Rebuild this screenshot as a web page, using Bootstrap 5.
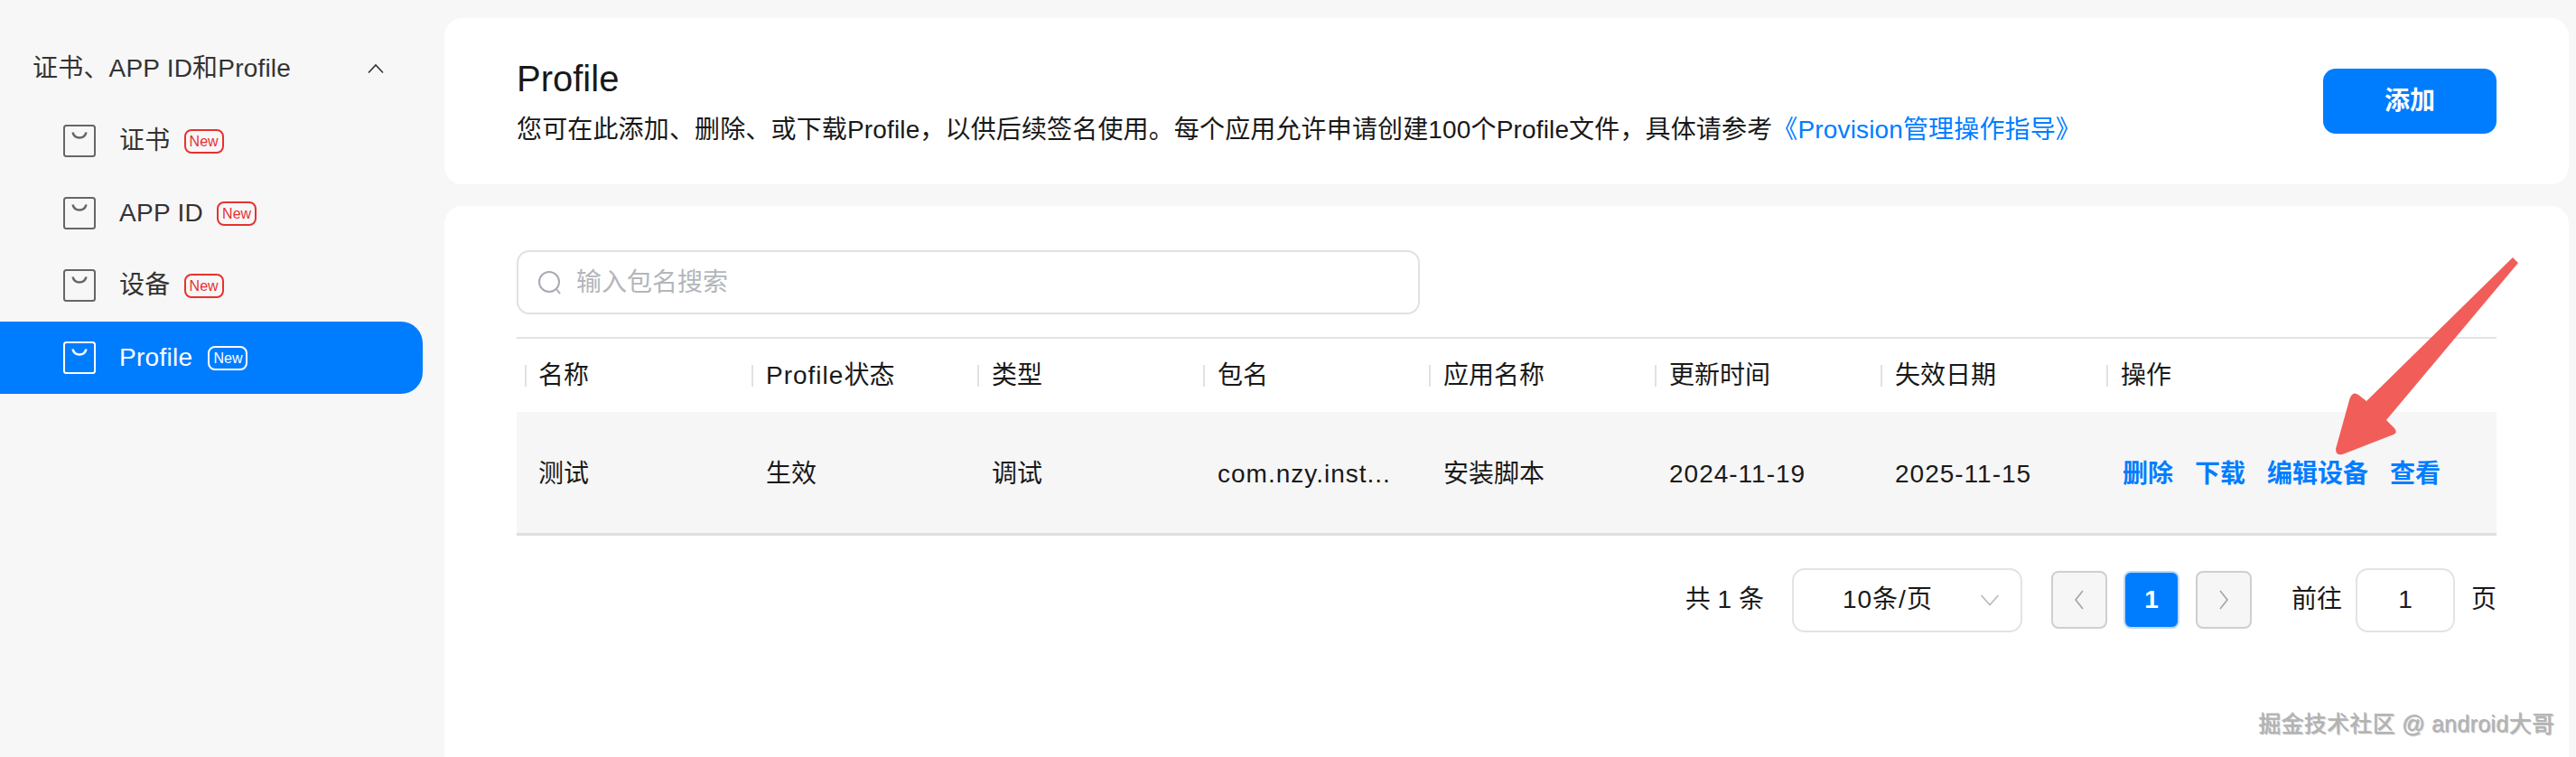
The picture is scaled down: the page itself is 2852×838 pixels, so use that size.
<!DOCTYPE html>
<html lang="zh">
<head>
<meta charset="utf-8">
<title>Profile</title>
<link href="https://cdn.jsdelivr.net/npm/bootstrap@5.3.0/dist/css/bootstrap.min.css" rel="stylesheet">
<style>
html,body{height:100%;}
body{background:#f7f7f7;color:#191919;font-family:"Liberation Sans","Noto Sans CJK SC",sans-serif;font-size:28px;overflow:hidden;}
.shell{height:838px;position:relative;}
.side{width:492px;padding:36px 24px 0 0;flex:none;}
.side-head{height:80px;padding:0 42px 0 36px;color:#333;letter-spacing:.2px;}
.side-item{height:80px;padding-left:70px;color:#333;gap:26px;border-radius:0 24px 24px 0;letter-spacing:.3px;}
.side-item.on{background:#007dff;color:#fff;}
.new-tag{font-size:16px;letter-spacing:0;line-height:23px;height:27px;padding:0 4px;border:2px solid #e8312f;color:#e8312f;border-radius:8px;margin-left:-11px;}
.on .new-tag{border-color:#fff;color:#fff;margin-left:-9px;}
.main-col{padding:20px 8px 0 0;gap:24px;min-width:0;}
.panel-top{height:184px;background:#fff;border-radius:20px;padding:0 80px;}
.panel-top h1{font-size:40px;font-weight:400;line-height:50px;margin:0 0 13px;}
.panel-top p{margin:0;line-height:38px;letter-spacing:.15px;}
.panel-top a,.act a{color:#007dff;text-decoration:none;}
.btn-add{width:192px;height:72px;background:#007dff;color:#fff;font-size:28px;font-weight:700;border:0;border-radius:14px;}
.panel-list{background:#fff;border-radius:20px 20px 0 0;padding:49px 80px 0;}
.search-box{width:1000px;height:71px;border:2px solid #dfe1e5;border-radius:14px;padding-left:22px;gap:16px;color:#b3b6bb;}
.data-grid{margin-top:25px;border-top:2px solid #e3e3e3;border-bottom:3px solid #dedede;}
.grid-line{display:grid;grid-template-columns:251px repeat(6,250px) 1fr;}
.grid-head{height:81px;}
.grid-body{height:134px;background:#f6f6f6;}
.cell{padding-left:25px;position:relative;white-space:nowrap;}
.cell:first-child{padding-left:24px;}
.grid-body .cell{padding-top:4px;}
.grid-head .cell::before{content:"";position:absolute;left:9px;top:50%;margin-top:-12px;width:2px;height:24px;background:#e2e2e2;}
.wide-run{letter-spacing:1px;}
.act{gap:24px;padding-left:27px;font-weight:700;}
.pager{height:142px;}
.sel-box{width:255px;height:71px;border:2px solid #e3e3e3;border-radius:14px;margin-left:31px;padding:0 23px 0 54px;background:#fff;}
.pg-wrap{gap:18px;margin:0 44px 0 32px;}
.pg{width:62px;height:64px;border-radius:8px;border:2px solid #cfcfcf;background:#f6f6f6;}
.pg.cur{background:#007dff;border-color:#c3d9f2;color:#fff;font-weight:700;}
.jump{width:110px;height:71px;border:2px solid #e3e3e3;border-radius:14px;margin:0 18px 0 15px;}
.mark-text{position:absolute;right:23px;top:786px;font-size:25px;letter-spacing:.3px;line-height:32px;color:#b4b4b4;text-shadow:-1px -1px 0 rgba(120,120,120,.55),1px 1px 0 rgba(235,235,235,.8);}
.arrow-over{position:absolute;left:2570px;top:270px;}
</style>
</head>
<body>
<div class="shell d-flex">
  <aside class="side">
    <div class="side-head d-flex align-items-center justify-content-between">
      <span>证书、APP ID和Profile</span>
      <svg width="20" height="12" viewBox="0 0 20 12" fill="none" stroke="#333" stroke-width="1.6"><path d="M2 10.5 10 2l8 8.500"/></svg>
    </div>
    <div class="side-item d-flex align-items-center">
      <svg width="36" height="36" viewBox="0 0 36 36" fill="none" stroke="#666" stroke-width="2"><rect x="1" y="1" width="34" height="34" rx="2.5"/><path d="M10.5 8.500c1 4 4 6 7.500 6s6.500-2 7.500-6" stroke-width="2.500"/></svg>
      <span>证书</span><span class="new-tag">New</span>
    </div>
    <div class="side-item d-flex align-items-center">
      <svg width="36" height="36" viewBox="0 0 36 36" fill="none" stroke="#666" stroke-width="2"><rect x="1" y="1" width="34" height="34" rx="2.5"/><path d="M10.5 8.500c1 4 4 6 7.500 6s6.500-2 7.500-6" stroke-width="2.500"/></svg>
      <span>APP ID</span><span class="new-tag">New</span>
    </div>
    <div class="side-item d-flex align-items-center">
      <svg width="36" height="36" viewBox="0 0 36 36" fill="none" stroke="#666" stroke-width="2"><rect x="1" y="1" width="34" height="34" rx="2.5"/><path d="M10.5 8.500c1 4 4 6 7.500 6s6.500-2 7.500-6" stroke-width="2.500"/></svg>
      <span>设备</span><span class="new-tag">New</span>
    </div>
    <div class="side-item on d-flex align-items-center">
      <svg width="36" height="36" viewBox="0 0 36 36" fill="none" stroke="#fff" stroke-width="2"><rect x="1" y="1" width="34" height="34" rx="2.5"/><path d="M10.5 8.500c1 4 4 6 7.500 6s6.500-2 7.500-6" stroke-width="2.500"/></svg>
      <span>Profile</span><span class="new-tag">New</span>
    </div>
  </aside>
  <main class="main-col flex-grow-1 d-flex flex-column">
    <section class="panel-top d-flex align-items-center justify-content-between">
      <div>
        <h1>Profile</h1>
        <p>您可在此添加、删除、或下载Profile，以供后续签名使用。每个应用允许申请创建100个Profile文件，具体请参考<a href="#">《Provision管理操作指导》</a></p>
      </div>
      <button class="btn-add" type="button">添加</button>
    </section>
    <section class="panel-list flex-grow-1">
      <div class="search-box d-flex align-items-center">
        <svg width="26" height="28" viewBox="0 0 26 28" fill="none" stroke="#a8abb2" stroke-width="2"><circle cx="12" cy="13" r="11"/><path d="m20 21 4 5"/></svg>
        <span>输入包名搜索</span>
      </div>
      <div class="data-grid">
        <div class="grid-line grid-head align-items-center">
          <div class="cell">名称</div><div class="cell"><span class="wide-run">Profile</span>状态</div><div class="cell">类型</div><div class="cell">包名</div><div class="cell">应用名称</div><div class="cell">更新时间</div><div class="cell">失效日期</div><div class="cell">操作</div>
        </div>
        <div class="grid-line grid-body align-items-center">
          <div class="cell">测试</div><div class="cell">生效</div><div class="cell">调试</div><div class="cell wide-run">com.nzy.inst...</div><div class="cell">安装脚本</div><div class="cell wide-run">2024-11-19</div><div class="cell wide-run">2025-11-15</div>
          <div class="cell act d-flex"><a href="#">删除</a><a href="#">下载</a><a href="#">编辑设备</a><a href="#">查看</a></div>
        </div>
      </div>
      <div class="pager d-flex align-items-center justify-content-end">
        <span>共 1 条</span>
        <div class="sel-box d-flex align-items-center justify-content-between"><span class="wide-run">10条/页</span>
          <svg width="22" height="13" viewBox="0 0 22 13" fill="none" stroke="#b5b8bd" stroke-width="1.6"><path d="m1.500 1 9.500 10.500L20.500 1"/></svg></div>
        <div class="d-flex pg-wrap">
          <div class="pg d-flex align-items-center justify-content-center"><svg width="12" height="22" viewBox="0 0 12 22" fill="none" stroke="#a0a3a8" stroke-width="1.6"><path d="M10 1 2 11l8 10"/></svg></div>
          <div class="pg cur d-flex align-items-center justify-content-center">1</div>
          <div class="pg d-flex align-items-center justify-content-center"><svg width="12" height="22" viewBox="0 0 12 22" fill="none" stroke="#a0a3a8" stroke-width="1.6"><path d="m2 1 8 10-8 10"/></svg></div>
        </div>
        <span>前往</span>
        <div class="jump d-flex align-items-center justify-content-center">1</div>
        <span>页</span>
      </div>
    </section>
  </main>
  <svg class="arrow-over" width="230" height="245" viewBox="2570 270 230 245"><path d="M2782 285 2788 291 2642 465 2651 474Q2655 479 2650 481L2596 502Q2586 506 2586 497L2601 443Q2604 432 2611 437L2620 444Z" fill="#f15e5a"/></svg>
  <div class="mark-text">掘金技术社区 @ android大哥</div>
</div>
</body>
</html>
